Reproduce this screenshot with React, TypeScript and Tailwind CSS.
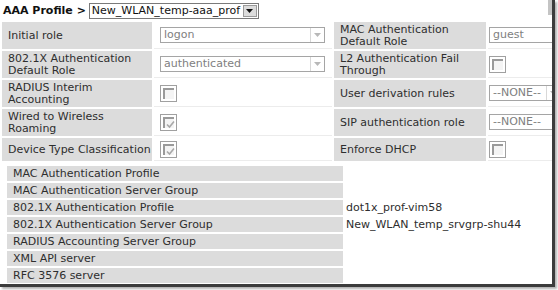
import React from "react";

type Row = {
  label: string;
  value: React.ReactNode;
  label2: string;
  value2: React.ReactNode;
  h: string;
};

const font = "font-['DejaVu_Sans','Verdana',sans-serif]";

const Select = ({ text, w }: { text: string; w: string }) => (
  <div className={`flex h-[16px] ${w} items-center border border-[#a5a5a5] bg-white`}>
    <span className="flex-1 truncate pl-[3px] text-[11px] leading-[14px] text-[#808080]">{text}</span>
    <span className="flex h-full w-[14px] items-center justify-center border-l border-[#d8d8d8]">
      <svg width="7" height="4" viewBox="0 0 7 4">
        <path d="M0 0 H7 L3.5 4 Z" fill="#b8b8b8" />
      </svg>
    </span>
  </div>
);

const Input = ({ text }: { text: string }) => (
  <div className="flex h-[16px] w-[90px] shrink-0 items-center border border-[#a5a5a5] bg-white">
    <span className="pl-[3px] text-[11px] leading-[14px] text-[#808080]">{text}</span>
  </div>
);

const Check = ({ checked }: { checked?: boolean }) => (
  <div className="relative h-[17px] w-[17px] border border-[#a0a0a0] bg-white p-[2px]">
    <div className="h-full w-full border-l-2 border-t-2 border-[#9a9a9a] bg-[#f4f4f4]">
      {checked && (
        <svg width="9" height="9" viewBox="0 0 9 9" className="ml-[1px] mt-[1px]">
          <path d="M1 4.5 L3.5 7 L8 1.5" stroke="#a8a8a8" strokeWidth="1.6" fill="none" />
        </svg>
      )}
    </div>
  </div>
);

const rows: Row[] = [
  {
    label: "Initial role",
    value: <Select text="logon" w="w-[165px]" />,
    label2: "MAC Authentication Default Role",
    value2: <Input text="guest" />,
    h: "h-[27px]",
  },
  {
    label: "802.1X Authentication Default Role",
    value: <Select text="authenticated" w="w-[165px]" />,
    label2: "L2 Authentication Fail Through",
    value2: <Check />,
    h: "h-[27px]",
  },
  {
    label: "RADIUS Interim Accounting",
    value: <Check />,
    label2: "User derivation rules",
    value2: <Select text="--NONE--" w="w-[72px] shrink-0" />,
    h: "h-[27px]",
  },
  {
    label: "Wired to Wireless Roaming",
    value: <Check checked />,
    label2: "SIP authentication role",
    value2: <Input text="--NONE--" />,
    h: "h-[27px]",
  },
  {
    label: "Device Type Classification",
    value: <Check checked />,
    label2: "Enforce DHCP",
    value2: <Check />,
    h: "h-[23px]",
  },
];

const lower: [string, string][] = [
  ["MAC Authentication Profile", ""],
  ["MAC Authentication Server Group", ""],
  ["802.1X Authentication Profile", "dot1x_prof-vim58"],
  ["802.1X Authentication Server Group", "New_WLAN_temp_srvgrp-shu44"],
  ["RADIUS Accounting Server Group", ""],
  ["XML API server", ""],
  ["RFC 3576 server", ""],
];

const App = () => {
  return (
    <div className={`h-[290px] w-[558px] overflow-hidden bg-white ${font} text-[11px] text-[#2e2e2e]`}>
      <div className="relative h-[287px] w-[555px] overflow-hidden border-b-[3px] border-r-[3px] border-[#3c3c3c] shadow-[2px_2px_2px_rgba(0,0,0,0.3)]">
        <div className="absolute right-0 top-0 h-[15px] w-[4px] bg-[#c4c4c4]" />

        <div className="flex h-[22px] items-center pl-[3px]">
          <span className="font-bold text-[#111]">AAA Profile &gt;</span>
          <div className="ml-[3px] flex h-[16px] w-[170px] items-center border border-[#7a7a7a] bg-white">
            <span className="flex-1 overflow-hidden whitespace-nowrap pl-[2px] leading-[14px] text-[#111]">New_WLAN_temp-aaa_prof</span>
            <span className="mr-[1px] flex h-[12px] w-[14px] shrink-0 items-center justify-center border border-[#9a9a9a] bg-[#dcdcdc]">
              <svg width="7" height="4" viewBox="0 0 7 4">
                <path d="M0 0 H7 L3.5 4 Z" fill="#111" />
              </svg>
            </span>
          </div>
        </div>

        <div className="flex flex-col gap-[2px] pl-[2px]">
          {rows.map((r) => (
            <div key={r.label} className={`flex gap-[2px] ${r.h}`}>
              <div className="flex w-[150px] shrink-0 items-center bg-[#dcdcdc] pl-[6px] leading-[12px]">{r.label}</div>
              <div className="flex w-[178px] shrink-0 items-center border-b border-[#ececec] pl-[6px]">{r.value}</div>
              <div className="flex w-[152px] shrink-0 items-center bg-[#dcdcdc] pl-[6px] leading-[12px]">{r.label2}</div>
              <div className="flex flex-1 items-center border-b border-[#ececec] pl-[1px]">{r.value2}</div>
            </div>
          ))}
        </div>

        <div className="mt-[5px] flex flex-col gap-[2px] pl-[7px]">
          {lower.map(([k, v]) => (
            <div key={k} className="flex h-[15px]">
              <div className="flex w-[336px] shrink-0 items-center bg-[#dcdcdc] pl-[6px] leading-[12px]">{k}</div>
              <div className="flex items-center pl-[3px] leading-[12px]">{v}</div>
            </div>
          ))}
        </div>
      </div>
    </div>
  );
};

export default App;
